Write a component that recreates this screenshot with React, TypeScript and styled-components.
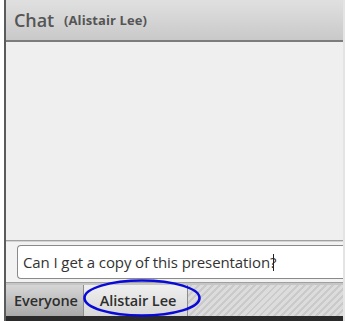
import React from "react";
import styled, { createGlobalStyle } from "styled-components";

const Global = createGlobalStyle`
  html, body { margin: 0; padding: 0; background: #ffffff; }
  #root { width: 345px; height: 321px; }
`;

const Page = styled.div`
  width: 345px;
  height: 321px;
  padding-left: 4px;
  box-sizing: border-box;
  background: #ffffff;
  font-family: "Open Sans", "Noto Sans", sans-serif;
`;

const Panel = styled.div`
  position: relative;
  height: 100%;
  display: flex;
  flex-direction: column;
  border-left: 2px solid #5b5b5b;
  border-right: 2px solid #e4e4e4;
  box-sizing: border-box;
  background: #efefef;
`;

const Header = styled.div`
  height: 40px;
  display: flex;
  align-items: center;
  padding-left: 8px;
  gap: 10px;
  background: linear-gradient(#e0e0e0, #c9c9c9);
  border-bottom: 2px solid #7c7c7c;
  box-shadow: 0 1px 0 #b8b8b8;
`;

const Title = styled.span`
  font-size: 18px;
  font-weight: 600;
  color: #555555;
  letter-spacing: -0.1px;
`;

const Sub = styled.span`
  font-size: 13px;
  font-weight: 700;
  color: #555555;
  letter-spacing: 0.1px;
`;

const Body = styled.div`
  flex: 1;
  background: #efefef;
`;

const InputArea = styled.div`
  border-top: 1px solid #a0a0a0;
  box-shadow: inset 0 1px 0 #d4d4d4;
  border-bottom: 1px solid #a0a0a0;
  padding: 4px 0 3px 11px;
  background: #f2f2f2;
`;

const InputBox = styled.div`
  height: 32px;
  display: flex;
  align-items: center;
  padding-left: 5px;
  background: #ffffff;
  border: 1px solid #8a8a8a;
  border-right: none;
  border-radius: 4px 0 0 4px;
  font-size: 15px;
  color: #333333;
  letter-spacing: -0.1px;
`;

const Caret = styled.span`
  display: inline-block;
  width: 1px;
  height: 17px;
  background: #222222;
  margin-left: -3px;
`;

const TabBar = styled.div`
  height: 31px;
  display: flex;
  border-top: 2px solid #c6c6c6;
  background: repeating-linear-gradient(
    -45deg,
    #dcdcdc 0px,
    #dcdcdc 3px,
    #cacaca 3px,
    #cacaca 5px
  );
`;

const Tab = styled.div<{ $active?: boolean }>`
  display: flex;
  align-items: center;
  padding: ${(p) => (p.$active ? "0 11px 0 16px" : "0 5px 0 8px")};
  font-size: 14.5px;
  font-weight: 600;
  color: #2e2e2e;
  letter-spacing: -0.1px;
  border-right: 1px solid #8c8c8c;
  background: ${(p) =>
    p.$active
      ? "linear-gradient(#efefef, #d8d8d8)"
      : "linear-gradient(#d6d6d6, #a9a9a9)"};
`;

const Bottom = styled.div`
  height: 5px;
  background: #2a2a2a;
`;

const Ring = styled.svg`
  position: absolute;
  left: 77px;
  top: 279px;
  overflow: visible;
`;

export default function App() {
  return (
    <Page>
      <Global />
      <Panel>
        <Header>
          <Title>Chat</Title>
          <Sub>(Alistair Lee)</Sub>
        </Header>
        <Body />
        <InputArea>
          <InputBox>
            Can I get a copy of this presentation?
            <Caret />
          </InputBox>
        </InputArea>
        <TabBar>
          <Tab>Everyone</Tab>
          <Tab $active>Alistair Lee</Tab>
        </TabBar>
        <Bottom />
        <Ring width="118" height="38" viewBox="0 0 118 38">
          <ellipse cx="59" cy="19" rx="57.5" ry="17.5" fill="none" stroke="#0a0ad8" strokeWidth="2.6" />
        </Ring>
      </Panel>
    </Page>
  );
}
